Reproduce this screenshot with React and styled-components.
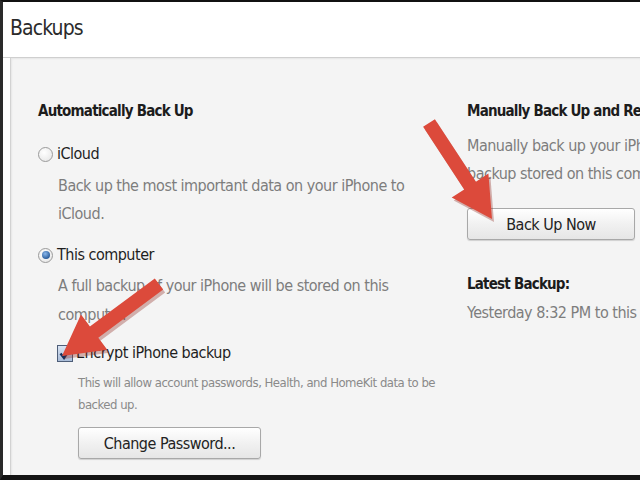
import styled, { createGlobalStyle } from "styled-components";

const GlobalStyle = createGlobalStyle`
  html, body {
    margin: 0;
    padding: 0;
    background: #ffffff;
  }
  body {
    font-family: "DejaVu Sans Condensed", "Liberation Sans", sans-serif;
  }
`;

const Styled = {
  Frame: styled.div`
    position: relative;
    width: 640px;
    height: 480px;
    box-sizing: border-box;
    border-top: 2px solid #111;
    border-left: 3px solid #2a2a2a;
    border-bottom: 5px solid #141414;
    background: #fff;
    display: flex;
    flex-direction: column;
    overflow: hidden;
  `,
  Header: styled.div`
    height: 55px;
    flex-shrink: 0;
    padding-left: 7px;
    display: flex;
    align-items: flex-start;
    border-bottom: 1px solid #cfcfcf;
  `,
  Title: styled.h1`
    margin: 12px 0 0;
    font-size: 21px;
    letter-spacing: -0.9px;
    line-height: 28px;
    font-weight: 400;
    color: #2b2b2b;
  `,
  Panel: styled.div`
    flex: 1;
    margin-left: 7px;
    border-left: 1px solid #d2d2d2;
    background: #f4f4f4;
    box-shadow: inset 1px 1px 2px rgba(0, 0, 0, 0.06);
    display: flex;
    padding: 43px 0 0 27px;
  `,
  Column: styled.div`
    display: flex;
    flex-direction: column;
    align-items: flex-start;
    flex-shrink: 0;
    width: ${(p) => p.$width}px;
    white-space: nowrap;
  `,
  Heading: styled.div`
    font-size: 15px;
    letter-spacing: -0.8px;
    line-height: 20px;
    font-weight: 700;
    color: #1c1c1c;
    margin-top: ${(p) => p.$top || 0}px;
  `,
  Option: styled.label`
    display: flex;
    align-items: center;
    gap: ${(p) => p.$gap || 5}px;
    font-size: 16px;
    letter-spacing: -0.5px;
    line-height: 24px;
    color: #1e1e1e;
    margin-top: ${(p) => p.$top || 0}px;
    padding-left: ${(p) => p.$indent || 0}px;
  `,
  Description: styled.div`
    font-size: 16px;
    letter-spacing: -0.5px;
    line-height: ${(p) => p.$lh || 28}px;
    color: #7d7d7d;
    margin-top: ${(p) => p.$top || 0}px;
    padding-left: ${(p) => p.$indent || 0}px;
  `,
  Note: styled.div`
    font-size: 13px;
    line-height: 22px;
    color: #8a8a8a;
    letter-spacing: -0.5px;
    padding-left: 40px;
    margin-top: 7px;
  `,
  Radio: styled.span`
    width: 15px;
    height: 15px;
    border-radius: 50%;
    box-sizing: border-box;
    border: 1px solid #9a9a9a;
    background: radial-gradient(circle at 40% 35%, #ffffff 0%, #e3e3e3 100%);
    display: flex;
    align-items: center;
    justify-content: center;
    &::after {
      content: "";
      display: ${(p) => (p.$checked ? "block" : "none")};
      width: 8px;
      height: 8px;
      border-radius: 50%;
      background: radial-gradient(circle at 40% 35%, #8ab8ec 0%, #2c5f9e 70%, #1f4a80 100%);
    }
  `,
  Check: styled.span`
    width: 16px;
    height: 17px;
    box-sizing: border-box;
    border: 1px solid #4e5e78;
    background: linear-gradient(#d9e4f3, #a9bcd8);
    display: flex;
    align-items: center;
    justify-content: center;
  `,
  Button: styled.button`
    font-family: inherit;
    font-size: 16px;
    letter-spacing: -0.5px;
    color: #222;
    width: ${(p) => p.$width}px;
    height: 32px;
    box-sizing: border-box;
    border: 1px solid #a8a8a8;
    border-radius: 3px;
    background: linear-gradient(#ffffff, #f1f1f1 50%, #e6e6e6);
    box-shadow: 0 1px 1px rgba(0, 0, 0, 0.15);
    margin-top: ${(p) => p.$top || 0}px;
    margin-left: ${(p) => p.$left || 0}px;
    padding: 0;
    cursor: pointer;
  `,
  Overlay: styled.svg`
    position: absolute;
    left: 0;
    top: 0;
    pointer-events: none;
  `,
};

const {
  Frame, Header, Title, Panel, Column, Heading, Option, Description, Note,
  Radio, Check, Button, Overlay,
} = Styled;

// build arrow outline from tail to tip
const arrowPoints = (tx, ty, hx, hy, shaft, headW, headL) => {
  const dx = hx - tx;
  const dy = hy - ty;
  const len = Math.hypot(dx, dy);
  const ux = dx / len;
  const uy = dy / len;
  const nx = -uy;
  const ny = ux;
  const bx = hx - ux * headL;
  const by = hy - uy * headL;
  const pts = [
    [tx + nx * shaft / 2, ty + ny * shaft / 2],
    [bx + nx * shaft / 2, by + ny * shaft / 2],
    [bx + nx * headW / 2, by + ny * headW / 2],
    [hx, hy],
    [bx - nx * headW / 2, by - ny * headW / 2],
    [bx - nx * shaft / 2, by - ny * shaft / 2],
    [tx - nx * shaft / 2, ty - ny * shaft / 2],
  ];
  return pts.map((p) => p.map((v) => v.toFixed(1)).join(",")).join(" ");
};

const Arrow = ({ from, to }) => {
  const points = arrowPoints(from[0], from[1], to[0], to[1], 14, 44, 40);
  return (
    <g>
      <polygon points={points} fill="#8e2a22" opacity="0.35" transform="translate(2 3)" />
      <polygon points={points} fill="#dc4a3b" />
    </g>
  );
};

export default function App() {
  return (
    <>
      <GlobalStyle />
      <Frame>
        <Header>
          <Title>Backups</Title>
        </Header>
        <Panel>
          <Column $width={429}>
            <Heading>Automatically Back Up</Heading>
            <Option $top={21} $gap={4}>
              <Radio />
              iCloud
            </Option>
            <Description $top={6} $indent={20}>
              Back up the most important data on your iPhone to
              <br />
              iCloud.
            </Description>
            <Option $top={15} $gap={4}>
              <Radio $checked />
              This computer
            </Option>
            <Description $top={4} $lh={29} $indent={20}>
              A full backup of your iPhone will be stored on this
              <br />
              computer.
            </Description>
            <Option $top={12} $indent={19} $gap={3}>
              <Check>
                <svg width="13" height="13" viewBox="0 0 13 13">
                  <path d="M1.5 6.5 L5 11 L11.5 1" fill="none" stroke="#15305c" strokeWidth="2.4" />
                </svg>
              </Check>
              Encrypt iPhone backup
            </Option>
            <Note>
              This will allow account passwords, Health, and HomeKit data to be
              <br />
              backed up.
            </Note>
            <Button $top={11} $left={40} $width={183}>
              Change Password...
            </Button>
          </Column>
          <Column $width={300}>
            <Heading>Manually Back Up and Restore</Heading>
            <Description $top={11}>
              Manually back up your iPhone to this computer or restore a
              <br />
              backup stored on this computer.
            </Description>
            <Button $top={20} $width={168}>
              Back Up Now
            </Button>
            <Heading $top={34}>Latest Backup:</Heading>
            <Description $top={5}>Yesterday 8:32 PM to this computer</Description>
          </Column>
        </Panel>
        <Overlay width="640" height="480" viewBox="0 0 640 480">
          <Arrow from={[426, 121]} to={[489, 217]} />
          <Arrow from={[156, 282]} to={[59, 354]} />
        </Overlay>
      </Frame>
    </>
  );
}
